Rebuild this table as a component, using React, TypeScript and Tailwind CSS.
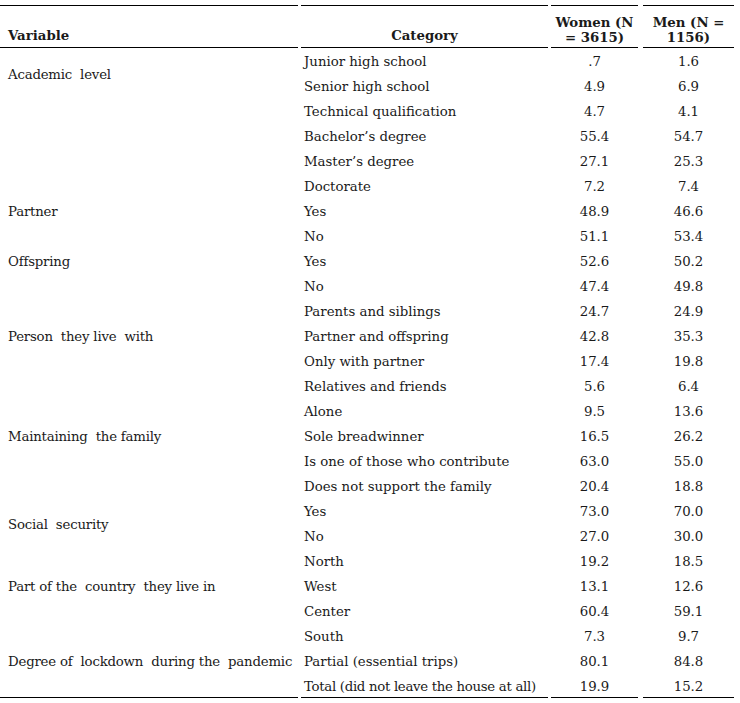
const rows: [string, string, string][] = [
  ["Junior high school", ".7", "1.6"],
  ["Senior high school", "4.9", "6.9"],
  ["Technical qualification", "4.7", "4.1"],
  ["Bachelor\u2019s degree", "55.4", "54.7"],
  ["Master\u2019s degree", "27.1", "25.3"],
  ["Doctorate", "7.2", "7.4"],
  ["Yes", "48.9", "46.6"],
  ["No", "51.1", "53.4"],
  ["Yes", "52.6", "50.2"],
  ["No", "47.4", "49.8"],
  ["Parents and siblings", "24.7", "24.9"],
  ["Partner and offspring", "42.8", "35.3"],
  ["Only with partner", "17.4", "19.8"],
  ["Relatives and friends", "5.6", "6.4"],
  ["Alone", "9.5", "13.6"],
  ["Sole breadwinner", "16.5", "26.2"],
  ["Is one of those who contribute", "63.0", "55.0"],
  ["Does not support the family", "20.4", "18.8"],
  ["Yes", "73.0", "70.0"],
  ["No", "27.0", "30.0"],
  ["North", "19.2", "18.5"],
  ["West", "13.1", "12.6"],
  ["Center", "60.4", "59.1"],
  ["South", "7.3", "9.7"],
  ["Partial (essential trips)", "80.1", "84.8"],
  ["Total (did not leave the house at all)", "19.9", "15.2"],
];

// left column: label (or blank) and how many rows it covers
const groups: { label: string; h: string }[] = [
  { label: "Academic\u00a0 level", h: "h-[50px]" },
  { label: "", h: "h-[100px]" },
  { label: "Partner", h: "h-[25px]" },
  { label: "", h: "h-[25px]" },
  { label: "Offspring", h: "h-[25px]" },
  { label: "", h: "h-[50px]" },
  { label: "Person\u00a0 they live\u00a0 with", h: "h-[25px]" },
  { label: "", h: "h-[75px]" },
  { label: "Maintaining\u00a0 the family", h: "h-[25px]" },
  { label: "", h: "h-[50px]" },
  { label: "Social\u00a0 security", h: "h-[50px]" },
  { label: "", h: "h-[25px]" },
  { label: "Part of the\u00a0 country\u00a0 they live in", h: "h-[25px]" },
  { label: "", h: "h-[50px]" },
  { label: "Degree of\u00a0 lockdown\u00a0 during the\u00a0 pandemic", h: "h-[25px]" },
  { label: "", h: "h-[25px]" },
];

export default function App() {
  return (
    <div className="bg-white min-h-[703px] pt-[5px] text-[13.3px] text-[#1a1a1a] font-['DejaVu_Serif',serif]">
      <div className="flex">
        <div className="w-[298px] flex flex-col">
          <div className="h-[43px] border-y border-black flex items-end pl-2 pb-[1px] font-bold">Variable</div>
          {groups.map((g, i) => (
            <div
              key={i}
              className={`${g.h} flex items-center pl-2 pt-[3px] whitespace-nowrap tracking-[-0.2px] ${i === groups.length - 1 ? "border-b border-black" : ""}`}
            >
              {g.label}
            </div>
          ))}
        </div>

        <div className="w-[247px] ml-[3px] flex flex-col">
          <div className="h-[43px] border-y border-black flex items-end justify-center pb-[1px] font-bold">Category</div>
          {rows.map((r, i) => (
            <div key={i} className={`h-[25px] flex items-center pl-[3px] pt-[3px] whitespace-nowrap ${i === rows.length - 1 ? "border-b border-black tracking-[-0.3px]" : ""}`}>
              {r[0]}
            </div>
          ))}
        </div>

        <div className="w-[87px] ml-[3px] flex flex-col">
          <div className="h-[43px] border-y border-black flex flex-col justify-end items-center pb-[2px] font-bold leading-[15px]">
            <span>Women (N</span>
            <span>= 3615)</span>
          </div>
          {rows.map((r, i) => (
            <div key={i} className={`h-[25px] flex items-center justify-center pt-[3px] ${i === rows.length - 1 ? "border-b border-black" : ""}`}>
              {r[1]}
            </div>
          ))}
        </div>

        <div className="w-[91px] ml-[5px] flex flex-col">
          <div className="h-[43px] border-y border-black flex flex-col justify-end items-center pb-[2px] font-bold leading-[15px]">
            <span>Men (N =</span>
            <span>1156)</span>
          </div>
          {rows.map((r, i) => (
            <div key={i} className={`h-[25px] flex items-center justify-center pt-[3px] ${i === rows.length - 1 ? "border-b border-black" : ""}`}>
              {r[2]}
            </div>
          ))}
        </div>
      </div>
    </div>
  );
}
